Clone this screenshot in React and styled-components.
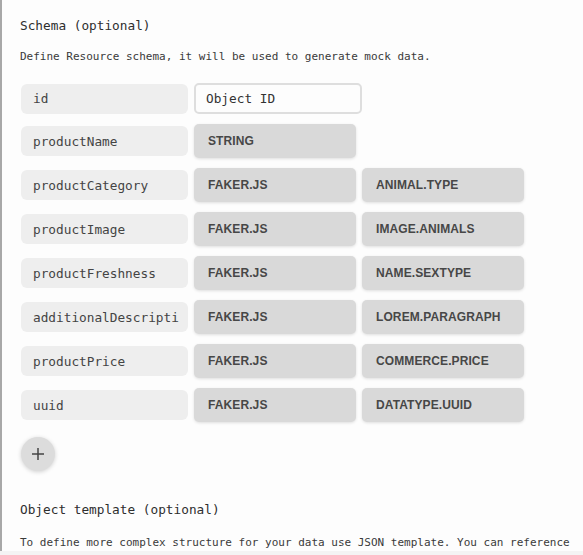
import React from "react";
import styled, { createGlobalStyle } from "styled-components";

const GlobalStyle = createGlobalStyle`
  html, body {
    margin: 0;
    padding: 0;
    background: #fdfdfd;
  }
`;

const fields = [
  { name: "productName", kind: "STRING" },
  { name: "productCategory", kind: "FAKER.JS", method: "ANIMAL.TYPE" },
  { name: "productImage", kind: "FAKER.JS", method: "IMAGE.ANIMALS" },
  { name: "productFreshness", kind: "FAKER.JS", method: "NAME.SEXTYPE" },
  { name: "additionalDescripti", kind: "FAKER.JS", method: "LOREM.PARAGRAPH" },
  { name: "productPrice", kind: "FAKER.JS", method: "COMMERCE.PRICE" },
  { name: "uuid", kind: "FAKER.JS", method: "DATATYPE.UUID" },
];

function App() {
  return (
    <>
      <GlobalStyle />
      <Panel>
        <Title>Schema (optional)</Title>
        <Hint>Define Resource schema, it will be used to generate mock data.</Hint>
        <Rows>
          <Row>
            <NameField>id</NameField>
            <IdInput defaultValue="Object ID" />
          </Row>
          {fields.map((f) => (
            <Row key={f.name} tall>
              <NameField>{f.name}</NameField>
              <Pill>{f.kind}</Pill>
              {f.method && <Pill>{f.method}</Pill>}
            </Row>
          ))}
        </Rows>
        <AddButton aria-label="add field">
          <svg width="14" height="14" viewBox="0 0 14 14">
            <path d="M7 1v12M1 7h12" stroke="#444" strokeWidth="1.5" />
          </svg>
        </AddButton>
        <Title second>Object template (optional)</Title>
        <Hint second>
          To define more complex structure for your data use JSON template. You can reference
        </Hint>
      </Panel>
      <BottomStrip />
    </>
  );
}

export default App;

const Panel = styled.div`
  border-left: 2px solid #a8a8a8;
  padding: 16px 0 0 18px;
  height: 551px;
  box-sizing: border-box;
  display: flex;
  flex-direction: column;
  align-items: flex-start;
  font-family: "DejaVu Sans Mono", "Liberation Mono", monospace;
  color: #333;
  overflow: hidden;

  & > * {
    flex-shrink: 0;
  }
`;

const Title = styled.h3`
  margin: ${(props) => (props.second ? "29px 0 0" : "0")};
  font-size: 12.75px;
  font-weight: normal;
  line-height: 20px;
  color: #2e2e2e;
`;

const Hint = styled.p`
  margin: ${(props) => (props.second ? "15px 0 0" : "13px 0 0")};
  font-size: 11px;
  line-height: 16px;
  color: #3a3a3a;
  white-space: nowrap;
`;

const Rows = styled.div`
  margin-top: 18px;
  margin-left: 1px;
  display: flex;
  flex-direction: column;
  gap: 10px;
`;

const Row = styled.div`
  display: flex;
  align-items: center;
  gap: 6px;
  height: ${(props) => (props.tall ? "34px" : "31px")};
`;

const NameField = styled.div`
  width: 167px;
  height: 30px;
  box-sizing: border-box;
  padding-left: 12px;
  display: flex;
  align-items: center;
  background: #eeeeee;
  border-radius: 6px;
  font-size: 12.75px;
  color: #444;
  white-space: nowrap;
  overflow: hidden;
`;

const IdInput = styled.input`
  width: 168px;
  height: 31px;
  box-sizing: border-box;
  padding: 0 0 0 10px;
  background: #fdfdfd;
  border: 2px solid #dedede;
  border-radius: 5px;
  font-family: "DejaVu Sans Mono", "Liberation Mono", monospace;
  font-size: 12.75px;
  color: #333;
  outline: none;
`;

const Pill = styled.div`
  width: 162px;
  height: 34px;
  box-sizing: border-box;
  padding-left: 14px;
  display: flex;
  align-items: center;
  background: #d9d9d9;
  border-radius: 5px;
  box-shadow: 0 1px 3px rgba(0, 0, 0, 0.12);
  font-family: "Liberation Sans", Arial, sans-serif;
  font-size: 12px;
  font-weight: bold;
  color: #474747;
  letter-spacing: 0.1px;
`;

const AddButton = styled.button`
  margin: 15px 0 0 1px;
  width: 34px;
  height: 34px;
  border-radius: 50%;
  border: none;
  background: #dcdcdc;
  box-shadow: 0 1px 4px rgba(0, 0, 0, 0.18);
  display: flex;
  align-items: center;
  justify-content: center;
  padding: 0;
  cursor: pointer;
`;

const BottomStrip = styled.div`
  height: 4px;
  background: #f4f4f4;
`;
